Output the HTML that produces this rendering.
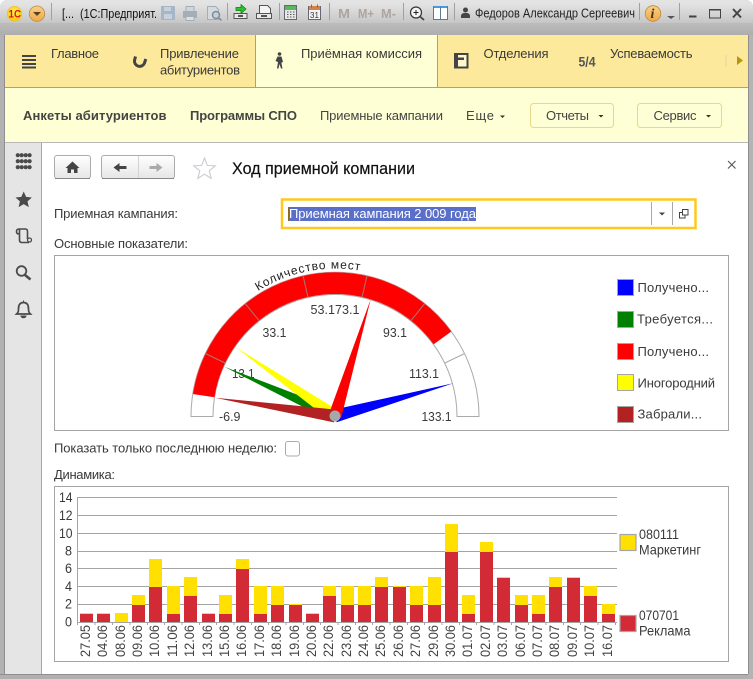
<!DOCTYPE html>
<html lang="ru"><head><meta charset="utf-8"><title>Ход приемной компании</title>
<style>
html,body{margin:0;padding:0;width:753px;height:679px;overflow:hidden;background:#fff}
svg{display:block;position:absolute;left:0;top:0}
text{font-family:"Liberation Sans",Arial,sans-serif;font-size:13px;fill:#3a3a3a}
.d{font-size:14px}
.x{fill:#444;font-size:14px}
</style></head><body>
<svg width="753" height="679" viewBox="0 0 753 679" xmlns="http://www.w3.org/2000/svg">
<defs>
<linearGradient id="tb" x1="0" y1="0" x2="0" y2="1"><stop offset="0" stop-color="#e4e4e4"/><stop offset=".2" stop-color="#e2e2e2"/><stop offset="1" stop-color="#c6c6c6"/></linearGradient>
<linearGradient id="tb2" x1="0" y1="0" x2="0" y2="1"><stop offset="0" stop-color="#bcbcbc"/><stop offset="1" stop-color="#adadad"/></linearGradient>
<linearGradient id="btn" x1="0" y1="0" x2="0" y2="1"><stop offset="0" stop-color="#fff"/><stop offset="1" stop-color="#e6e6e6"/></linearGradient>
<linearGradient id="orb" x1="0" y1="0" x2="0" y2="1"><stop offset="0" stop-color="#f8d08a"/><stop offset="1" stop-color="#f0a845"/></linearGradient>
<radialGradient id="yel" cx=".5" cy=".4" r=".6"><stop offset="0" stop-color="#fff35a"/><stop offset="1" stop-color="#f8c800"/></radialGradient>
</defs>

<!-- window frame -->
<rect x="0" y="0" width="753" height="679" fill="#fff"/>
<path d="M0 679V8Q0 0 8 0H745Q753 0 753 8V679Z" fill="#b2b2b2"/>
<path d="M0 23V8Q0 0 8 0H745Q753 0 753 8V23Z" fill="url(#tb)"/>
<rect x="0" y="23" width="753" height="12" fill="url(#tb2)"/>
<rect x="0" y="674" width="753" height="5" fill="#b0b0b0"/>
<rect x="0" y="674" width="753" height="1" fill="#8f8f8f"/>
<rect x="748" y="35" width="5" height="644" fill="#b4b4b4"/>
<rect x="748" y="35" width="1" height="639" fill="#8f8f8f"/>
<rect x="4" y="35" width="1" height="639" fill="#8f8f8f"/>

<!-- section tabs -->
<rect x="5" y="35" width="743" height="53" fill="#fce99c"/>
<rect x="255" y="35" width="182" height="53" fill="#ffffd6"/>
<rect x="5" y="87" width="743" height="1" fill="#c4a52c"/>
<rect x="255" y="35" width="1" height="53" fill="#c4a52c"/>
<rect x="437" y="35" width="1" height="53" fill="#c4a52c"/>
<!-- sub bar -->
<rect x="5" y="88" width="743" height="54" fill="#ffffd5"/>
<rect x="5" y="142" width="743" height="1" fill="#b8b8b8"/>
<!-- sidebar / content -->
<rect x="5" y="143" width="743" height="531" fill="#fff"/>
<rect x="5" y="143" width="36" height="531" fill="#e5e5e5"/>
<rect x="41" y="143" width="1" height="531" fill="#a8a8a8"/>

<!-- title bar -->
<circle cx="14.500" cy="13.700" r="7.300" fill="url(#yel)" stroke="#e8c040" stroke-width=".7"/>
<text x="8.500" y="17.500" style="font-size:11px;font-weight:bold;fill:#d8141e" textLength="12.500" lengthAdjust="spacingAndGlyphs">1С</text>
<circle cx="37" cy="13.700" r="7.700" fill="url(#orb)" stroke="#b88a40" stroke-width=".8"/>
<path d="M33 12h8l-4 4z" fill="#5a4020"/>
<path d="M51.500 3v17M227.500 3v17M279.500 3v17M329.500 3v17M403.500 3v17M454.500 3v17M639.500 3v17M679.500 3v17" stroke="#a0a0a0"/>
<text x="62" y="18" textLength="95" lengthAdjust="spacingAndGlyphs" style="font-size:12.500px;fill:#111">[...&#160;&#160;(1С:Предприят.</text>
<!-- faded save/print/preview -->
<path d="M161 6h14v14h-14z" fill="#a6b6c6"/>
<path d="M164 7h7v4h-7zM164 14h8v5h-8z" fill="#c8d2dc"/>
<path d="M183 11h14v7h-14z" fill="#a4aeb8"/><path d="M186 6.500h8v5h-8z" fill="#d0d6dc" stroke="#a4aeb8"/><path d="M186 16.500h8v4h-8z" fill="#dce0e4" stroke="#a4aeb8"/>
<path d="M207.500 6.500h8l3 3v10h-11z" fill="#d4dae0" stroke="#a4aeb8"/><circle cx="216" cy="15" r="3.500" fill="#c8d0d8" stroke="#7f8c98" stroke-width="1.500"/><path d="M218.500 17.500l3 3" stroke="#7f8c98" stroke-width="1.500"/>
<!-- links -->
<path d="M234 13.500h13v5h-13z" fill="#e8e8e8" stroke="#555"/><path d="M238 16h5" stroke="#555" stroke-width="2"/>
<path d="M236 7.500h5v-3l5 4.500-5 4.500v-3h-5z" fill="#22cc22" stroke="#107010" stroke-width=".7"/>
<path d="M259.500 5.500h8l3 3v6h-11z" fill="#f4f4f4" stroke="#555"/><path d="M256.500 13.500h15v5h-15z" fill="#e8e8e8" stroke="#555"/><path d="M261 16h6" stroke="#555" stroke-width="2"/>
<!-- calc -->
<rect x="284.500" y="5.500" width="12" height="14" fill="#e8e8e8" stroke="#667"/><rect x="285" y="6" width="11" height="4" fill="#5ab85a"/>
<path d="M287 12h1.500M290 12h1.500M293 12h1.500M287 14.500h1.500M290 14.500h1.500M293 14.500h1.500M287 17h1.500M290 17h1.500M293 17h1.500" stroke="#555"/>
<!-- calendar -->
<rect x="308.500" y="6.500" width="12" height="13" fill="#f4f4f4" stroke="#667"/><rect x="309" y="6" width="11" height="4" fill="#d0834c"/>
<path d="M311.500 4.500v3M317.500 4.500v3" stroke="#a05a28"/>
<text x="310" y="18" style="font-size:8px;fill:#333" textLength="9">31</text>
<!-- M -->
<text x="338" y="18" style="font-weight:bold;fill:#ada59e;font-size:13px" textLength="12" lengthAdjust="spacingAndGlyphs">M</text>
<text x="358" y="18" style="font-weight:bold;fill:#ada59e;font-size:13px" textLength="16" lengthAdjust="spacingAndGlyphs">M+</text>
<text x="381" y="18" style="font-weight:bold;fill:#ada59e;font-size:13px" textLength="15" lengthAdjust="spacingAndGlyphs">M-</text>
<!-- zoom -->
<circle cx="416" cy="12.500" r="5.500" fill="#f4f4f4" stroke="#333" stroke-width="1.200"/><path d="M413.500 12.500h5M416 10v5" stroke="#222"/><path d="M420 16.500l4 3.500" stroke="#444" stroke-width="1.800"/>
<!-- panel -->
<rect x="433.500" y="6.500" width="14" height="13" fill="#fff" stroke="#5a7a9a"/><rect x="434" y="6" width="13" height="2" fill="#4a9ae0"/><path d="M440.500 7v12" stroke="#5a7a9a"/>
<!-- user -->
<circle cx="465.500" cy="10" r="2.500" fill="#444"/><path d="M461 18v-2q0-2.500 3-3h3q3 .5 3 3v2z" fill="#444"/>
<text x="475" y="17.500" textLength="160" lengthAdjust="spacingAndGlyphs" style="font-size:12.500px;fill:#222">Федоров Александр Сергеевич</text>
<circle cx="653" cy="13.500" r="7.800" fill="url(#orb)" stroke="#b88a40" stroke-width=".8"/>
<text x="650.500" y="18" style="font-family:'Liberation Serif',serif;font-weight:bold;font-style:italic;font-size:14px;fill:#4a3410">i</text>
<path d="M667 16h8l-4 3z" fill="#555"/>
<rect x="689" y="15.500" width="7.500" height="2" fill="#444"/>
<rect x="709.500" y="9.500" width="11" height="8.500" fill="none" stroke="#444"/><rect x="709" y="9" width="12" height="1.500" fill="#444"/>
<path d="M733 9l8 8.500M741 9l-8 8.500" stroke="#444" stroke-width="2"/>

<!-- tabs content -->
<path d="M22 56h14M22 60h14M22 64h14M22 67.500h14" stroke="#444" stroke-width="2"/>
<text x="51" y="58" textLength="48">Главное</text>
<path d="M135.500 56.500l-1 4a5.200 5.200 0 0 0 9.800 3l1.500-4.500" fill="none" stroke="#444" stroke-width="3"/>
<text x="160" y="58" textLength="79">Привлечение</text>
<text x="160" y="74.500" textLength="80">абитуриентов</text>
<circle cx="279.500" cy="54" r="1.800" fill="#444"/>
<path d="M277.500 56.500h4l1.500 5.500-1.500.5v1l1 5h-1.500l-1.500-4.500-1 4.500h-1.500l1-6.500-2.500-1z" fill="#444"/>
<text x="301" y="58" textLength="121">Приёмная комиссия</text>
<rect x="455" y="54" width="12.500" height="13.500" fill="#fff6cc" stroke="#444" stroke-width="2"/>
<path d="M454 53h4v15h-4zM458 57.500h6v2.500h-6z" fill="#444"/>
<text x="483.500" y="58" textLength="65">Отделения</text>
<text x="578.500" y="66.500" textLength="17" lengthAdjust="spacingAndGlyphs" style="font-size:14px;font-weight:bold;fill:#555">5/4</text>
<text x="610" y="58" textLength="82.500">Успеваемость</text>
<rect x="725" y="55" width="2" height="12" fill="#f2dfa0"/>
<path d="M737 56l6 4.500-6 4.500z" fill="#b8960c"/>

<!-- sub bar content -->
<text x="23" y="120" textLength="143.500" style="font-weight:bold;fill:#444">Анкеты абитуриентов</text>
<text x="190" y="120" textLength="107" style="font-weight:bold;fill:#444">Программы СПО</text>
<text x="320" y="120" textLength="123" style="fill:#444">Приемные кампании</text>
<text x="466" y="120" textLength="28" style="fill:#444">Еще</text>
<path d="M500 115.500h5l-2.500 2.500z" fill="#333"/>
<rect x="530.500" y="103.500" width="83" height="24" rx="3" fill="#ffffd5" stroke="#e8d88c"/>
<text x="546" y="120" textLength="43" style="fill:#444">Отчеты</text>
<path d="M598.500 115h5l-2.500 2.500z" fill="#333"/>
<rect x="637.500" y="103.500" width="84" height="24" rx="3" fill="#ffffd5" stroke="#e8d88c"/>
<text x="653.500" y="120" textLength="43" style="fill:#444">Сервис</text>
<path d="M706 115h5l-2.500 2.500z" fill="#333"/>

<!-- sidebar icons -->
<g fill="#4a4a4a">
<circle cx="17.800" cy="155.200" r="2.100"/><circle cx="21.700" cy="155.200" r="2.100"/><circle cx="25.700" cy="155.200" r="2.100"/><circle cx="29.600" cy="155.200" r="2.100"/>
<circle cx="17.800" cy="161.200" r="2.100"/><circle cx="21.700" cy="161.200" r="2.100"/><circle cx="25.700" cy="161.200" r="2.100"/><circle cx="29.600" cy="161.200" r="2.100"/>
<circle cx="17.800" cy="167.200" r="2.100"/><circle cx="21.700" cy="167.200" r="2.100"/><circle cx="25.700" cy="167.200" r="2.100"/><circle cx="29.600" cy="167.200" r="2.100"/>
<path d="M23.700 191.500l2.400 5.400 5.800.6-4.400 3.900 1.300 5.700-5.100-3-5.100 3 1.300-5.700-4.400-3.900 5.800-.6z"/>
</g>
<path d="M19 229h6.500q2 0 2 2.500V239M19 229q-2.500 0-2.500 2.500t2.500 2.500M19.500 229.500V240q0 2.500 2.500 2.500h7" fill="none" stroke="#4a4a4a" stroke-width="1.600"/>
<circle cx="29.500" cy="240" r="2" fill="#e5e5e5" stroke="#4a4a4a" stroke-width="1.300"/>
<circle cx="21.500" cy="271" r="4.800" fill="none" stroke="#4a4a4a" stroke-width="1.800"/>
<path d="M25 275l5.500 4.500" stroke="#4a4a4a" stroke-width="2.600"/>
<path d="M23.500 302.500q5 0 5 6.500c0 3 .5 3.500 2 5h-14c1.500-1.500 2-2 2-5q0-6.500 5-6.500z" fill="none" stroke="#4a4a4a" stroke-width="1.700"/>
<path d="M21 316h5q-.5 1.800-2.500 1.800T21 316zM23.500 300.500v2" fill="#4a4a4a" stroke="#4a4a4a"/>

<!-- nav buttons -->
<rect x="54.500" y="155.500" width="36" height="23" rx="2.500" fill="url(#btn)" stroke="#ababab"/>
<path d="M55 178.500h35" stroke="#888"/>
<path d="M72.500 161.500l7 6.500h-2v5h-3.500v-3.500h-3v3.500h-3.500v-5h-2z" fill="#444"/>
<rect x="101.500" y="155.500" width="73" height="23" rx="2.500" fill="url(#btn)" stroke="#ababab"/>
<path d="M102 178.500h72" stroke="#888"/>
<path d="M138.500 156v22" stroke="#d4d4d4"/>
<path d="M113.500 167.500l6-4.500v3h7v3h-7v3z" fill="#444"/>
<path d="M162.500 167.500l-6-4.500v3h-7v3h7v3z" fill="#aaa"/>
<path d="M204.500 158l2.900 7.400 7.900.4-6.100 5 2 7.600-6.700-4.300-6.700 4.300 2-7.600-6.100-5 7.900-.4z" fill="#fff" stroke="#c8ccd4" stroke-width="1.100"/>
<text x="232" y="174" textLength="183" lengthAdjust="spacingAndGlyphs" style="font-size:17px;fill:#111;stroke:#111;stroke-width:.2">Ход приемной компании</text>
<path d="M728 161l7.500 7.500M735.500 161l-7.500 7.500" stroke="#555" stroke-width="1.100"/>

<!-- form -->
<text x="54" y="218" textLength="124">Приемная кампания:</text>
<rect x="282" y="199.500" width="413.500" height="28.500" fill="#fff" stroke="#ffc81e" stroke-width="2.500"/>
<rect x="288" y="207" width="1" height="14" fill="#8a6a20"/>
<rect x="289" y="207" width="187" height="14" fill="#5a6fc8"/>
<text x="289" y="218" textLength="187" style="fill:#fff">Приемная кампания 2 009 года</text>
<path d="M651.500 202v23M672.500 202v23" stroke="#a8a8a8"/>
<path d="M659 212.500h6l-3 3z" fill="#444"/>
<rect x="682.500" y="209.500" width="5.500" height="5.500" fill="#fff" stroke="#444"/>
<path d="M682 212.500h-2.500v5.500h5.500v-3" fill="none" stroke="#444"/>
<text x="54" y="248" textLength="134">Основные показатели:</text>

<!-- gauge box -->
<rect x="54.500" y="255.500" width="674" height="175" fill="#fff" stroke="#a5a5a5"/>
<path d="M191 416.500A144 144 0 0 1 479 416.500H457A122 122 0 0 0 213 416.500Z" fill="#fff" stroke="#aaa"/>
<path d="M192.700 394A144 144 0 0 1 451.500 331.400L433.700 344.300A122 122 0 0 0 214.400 397.300Z" fill="#f00"/>
<path d="M192.700 394A144 144 0 0 1 451.500 331.400" fill="none" stroke="#c89090" stroke-width=".7"/>
<g stroke="#a87878" stroke-width="1">
<path d="M205.300 353.500L225.100 363"/>
<path d="M245.200 303.400L259 320.600"/>
<path d="M303 275.600L307.900 297"/>
<path d="M367 275.600L362.100 297"/>
<path d="M424.800 303.400L411 320.600"/>
</g>
<path d="M464.700 353.500L444.900 363" stroke="#aaa"/>
<text x="219" y="421" textLength="21.500" lengthAdjust="spacingAndGlyphs">-6.9</text>
<text x="232" y="378" textLength="22.500" lengthAdjust="spacingAndGlyphs">13.1</text>
<text x="262.500" y="337" textLength="24" lengthAdjust="spacingAndGlyphs">33.1</text>
<text x="310.500" y="314" textLength="49" lengthAdjust="spacingAndGlyphs">53.173.1</text>
<text x="383" y="337" textLength="24" lengthAdjust="spacingAndGlyphs">93.1</text>
<text x="409" y="378" textLength="30" lengthAdjust="spacingAndGlyphs">113.1</text>
<text x="421.500" y="421" textLength="30" lengthAdjust="spacingAndGlyphs">133.1</text>
<path id="arc" d="M258 291A146.500 146.500 0 0 1 362 271" fill="none"/>
<text style="font-size:12px;fill:#222"><textPath href="#arc" textLength="106" lengthAdjust="spacing">Количество мест</textPath></text>
<path d="M453.300 383.300L336.700 422.300 333.300 409.700Z" fill="#00f"/>
<path d="M224.300 366.700L337.600 410.100 332.400 421.900Z" fill="#008000"/>
<path d="M235.700 347.300L338.700 410.700 331.300 421.300Z" fill="#ff0"/>
<path d="M370.700 299.300L341.200 417.900 328.800 414.100Z" fill="#f00"/>
<path d="M215 397.700L336 409.600 334 422.400Z" fill="#b22222"/>
<circle cx="335" cy="416" r="5.500" fill="#a8a8a8"/>

<!-- gauge legend -->
<g stroke="#a5a5a5">
<rect x="617.500" y="279.500" width="16" height="16" fill="#00f"/>
<rect x="617.500" y="311.500" width="16" height="16" fill="#008000"/>
<rect x="617.500" y="343.500" width="16" height="16" fill="#f00"/>
<rect x="617.500" y="374.500" width="16" height="16" fill="#ff0"/>
<rect x="617.500" y="406.500" width="16" height="16" fill="#b22222"/>
</g>
<text x="637.500" y="292" textLength="71.500">Получено...</text>
<text x="637" y="323.500" textLength="76">Требуется...</text>
<text x="637.500" y="356" textLength="71.500">Получено...</text>
<text x="637.500" y="387.500" textLength="77.500">Иногородний</text>
<text x="637.500" y="418.500" textLength="64.500">Забрали...</text>

<text x="54" y="452.500" textLength="223">Показать только последнюю неделю:</text>
<rect x="285.500" y="441.500" width="14" height="14.500" rx="2.500" fill="#fff" stroke="#aaa"/>
<text x="54" y="479" textLength="61">Динамика:</text>

<!-- bar chart -->
<rect x="54.500" y="486.500" width="674" height="175" fill="#fff" stroke="#a5a5a5"/>
<path d="M77.500 497.500H617M77.500 515.500H617M77.500 533.500H617M77.500 551.500H617M77.500 568.500H617M77.500 586.500H617M77.500 604.500H617M77.500 622.500H617M77.500 497V622" stroke="#a5a5a5" fill="none"/>
<path d="M77.500 622v3M95 622v3M112.500 622v3M130 622v3M147.500 622v3M164.500 622v3M182 622v3M199.500 622v3M216.500 622v3M234 622v3M251.500 622v3M268.500 622v3M286 622v3M303.500 622v3M320.500 622v3M338 622v3M355.500 622v3M372.500 622v3M390 622v3M407.500 622v3M424.500 622v3M442 622v3M459.500 622v3M476.500 622v3M494 622v3M511.500 622v3M528.500 622v3M546 622v3M563.500 622v3M580.500 622v3M598 622v3M615.500 622v3" stroke="#a5a5a5"/>
<path fill="#ffe000" d="M80 613h13v9h-13zM97 613h13v9h-13zM115 613h13v9h-13zM132 595h13v27h-13zM149 559h13v63h-13zM167 586h13v36h-13zM184 577h13v45h-13zM202 613h13v9h-13zM219 595h13v27h-13zM236 559h13v63h-13zM254 586h13v36h-13zM271 586h13v36h-13zM289 604h13v18h-13zM306 613h13v9h-13zM323 586h13v36h-13zM341 586h13v36h-13zM358 586h13v36h-13zM375 577h13v45h-13zM393 586h13v36h-13zM410 586h13v36h-13zM428 577h13v45h-13zM445 524h13v98h-13zM462 595h13v27h-13zM480 542h13v80h-13zM497 577h13v45h-13zM515 595h13v27h-13zM532 595h13v27h-13zM549 577h13v45h-13zM567 577h13v45h-13zM584 586h13v36h-13zM602 604h13v18h-13z"/>
<path fill="#d22b36" d="M80 614h13v8h-13zM97 614h13v8h-13zM132 605h13v17h-13zM149 587h13v35h-13zM167 614h13v8h-13zM184 596h13v26h-13zM202 614h13v8h-13zM219 614h13v8h-13zM236 569h13v53h-13zM254 614h13v8h-13zM271 605h13v17h-13zM289 605h13v17h-13zM306 614h13v8h-13zM323 596h13v26h-13zM341 605h13v17h-13zM358 605h13v17h-13zM375 587h13v35h-13zM393 587h13v35h-13zM410 605h13v17h-13zM428 605h13v17h-13zM445 552h13v70h-13zM462 614h13v8h-13zM480 552h13v70h-13zM497 578h13v44h-13zM515 605h13v17h-13zM532 614h13v8h-13zM549 587h13v35h-13zM567 578h13v44h-13zM584 596h13v26h-13zM602 614h13v8h-13z"/>
<g>
<text class="d" x="59" y="502" textLength="13.500" lengthAdjust="spacingAndGlyphs">14</text>
<text class="d" x="59" y="520" textLength="13.500" lengthAdjust="spacingAndGlyphs">12</text>
<text class="d" x="59" y="538" textLength="13.500" lengthAdjust="spacingAndGlyphs">10</text>
<text class="d" x="65" y="555.500" textLength="7" lengthAdjust="spacingAndGlyphs">8</text>
<text class="d" x="65" y="573" textLength="7" lengthAdjust="spacingAndGlyphs">6</text>
<text class="d" x="65" y="591" textLength="7" lengthAdjust="spacingAndGlyphs">4</text>
<text class="d" x="65" y="608.500" textLength="7" lengthAdjust="spacingAndGlyphs">2</text>
<text class="d" x="65" y="626.500" textLength="7" lengthAdjust="spacingAndGlyphs">0</text>
</g>
<g>
<text class="x" transform="translate(90,657) rotate(-90)" textLength="32" lengthAdjust="spacingAndGlyphs">27.05</text>
<text class="x" transform="translate(107,657) rotate(-90)" textLength="32" lengthAdjust="spacingAndGlyphs">04.06</text>
<text class="x" transform="translate(125,657) rotate(-90)" textLength="32" lengthAdjust="spacingAndGlyphs">08.06</text>
<text class="x" transform="translate(142,657) rotate(-90)" textLength="32" lengthAdjust="spacingAndGlyphs">09.06</text>
<text class="x" transform="translate(159,657) rotate(-90)" textLength="32" lengthAdjust="spacingAndGlyphs">10.06</text>
<text class="x" transform="translate(177,657) rotate(-90)" textLength="32" lengthAdjust="spacingAndGlyphs">11.06</text>
<text class="x" transform="translate(194,657) rotate(-90)" textLength="32" lengthAdjust="spacingAndGlyphs">12.06</text>
<text class="x" transform="translate(212,657) rotate(-90)" textLength="32" lengthAdjust="spacingAndGlyphs">13.06</text>
<text class="x" transform="translate(229,657) rotate(-90)" textLength="32" lengthAdjust="spacingAndGlyphs">15.06</text>
<text class="x" transform="translate(246,657) rotate(-90)" textLength="32" lengthAdjust="spacingAndGlyphs">16.06</text>
<text class="x" transform="translate(264,657) rotate(-90)" textLength="32" lengthAdjust="spacingAndGlyphs">17.06</text>
<text class="x" transform="translate(281,657) rotate(-90)" textLength="32" lengthAdjust="spacingAndGlyphs">18.06</text>
<text class="x" transform="translate(299,657) rotate(-90)" textLength="32" lengthAdjust="spacingAndGlyphs">19.06</text>
<text class="x" transform="translate(316,657) rotate(-90)" textLength="32" lengthAdjust="spacingAndGlyphs">20.06</text>
<text class="x" transform="translate(333,657) rotate(-90)" textLength="32" lengthAdjust="spacingAndGlyphs">22.06</text>
<text class="x" transform="translate(351,657) rotate(-90)" textLength="32" lengthAdjust="spacingAndGlyphs">23.06</text>
<text class="x" transform="translate(368,657) rotate(-90)" textLength="32" lengthAdjust="spacingAndGlyphs">24.06</text>
<text class="x" transform="translate(385,657) rotate(-90)" textLength="32" lengthAdjust="spacingAndGlyphs">25.06</text>
<text class="x" transform="translate(403,657) rotate(-90)" textLength="32" lengthAdjust="spacingAndGlyphs">26.06</text>
<text class="x" transform="translate(420,657) rotate(-90)" textLength="32" lengthAdjust="spacingAndGlyphs">27.06</text>
<text class="x" transform="translate(438,657) rotate(-90)" textLength="32" lengthAdjust="spacingAndGlyphs">29.06</text>
<text class="x" transform="translate(455,657) rotate(-90)" textLength="32" lengthAdjust="spacingAndGlyphs">30.06</text>
<text class="x" transform="translate(472,657) rotate(-90)" textLength="32" lengthAdjust="spacingAndGlyphs">01.07</text>
<text class="x" transform="translate(490,657) rotate(-90)" textLength="32" lengthAdjust="spacingAndGlyphs">02.07</text>
<text class="x" transform="translate(507,657) rotate(-90)" textLength="32" lengthAdjust="spacingAndGlyphs">03.07</text>
<text class="x" transform="translate(525,657) rotate(-90)" textLength="32" lengthAdjust="spacingAndGlyphs">06.07</text>
<text class="x" transform="translate(542,657) rotate(-90)" textLength="32" lengthAdjust="spacingAndGlyphs">07.07</text>
<text class="x" transform="translate(559,657) rotate(-90)" textLength="32" lengthAdjust="spacingAndGlyphs">08.07</text>
<text class="x" transform="translate(577,657) rotate(-90)" textLength="32" lengthAdjust="spacingAndGlyphs">09.07</text>
<text class="x" transform="translate(594,657) rotate(-90)" textLength="32" lengthAdjust="spacingAndGlyphs">10.07</text>
<text class="x" transform="translate(612,657) rotate(-90)" textLength="32" lengthAdjust="spacingAndGlyphs">16.07</text>
</g>
<rect x="620" y="534.500" width="16" height="16" fill="#ffe000" stroke="#a5a5a5" stroke-width="1.200"/>
<rect x="620" y="615.500" width="16" height="16" fill="#d22b36" stroke="#a5a5a5" stroke-width="1.200"/>
<text x="639" y="539" textLength="40" lengthAdjust="spacingAndGlyphs" style="font-size:14px">080111</text>
<text x="639" y="554.500" textLength="62" lengthAdjust="spacingAndGlyphs" style="font-size:14px">Маркетинг</text>
<text x="639" y="620" textLength="40" lengthAdjust="spacingAndGlyphs" style="font-size:14px">070701</text>
<text x="639" y="635.500" textLength="51.500" lengthAdjust="spacingAndGlyphs" style="font-size:14px">Реклама</text>
</svg>
</body></html>
